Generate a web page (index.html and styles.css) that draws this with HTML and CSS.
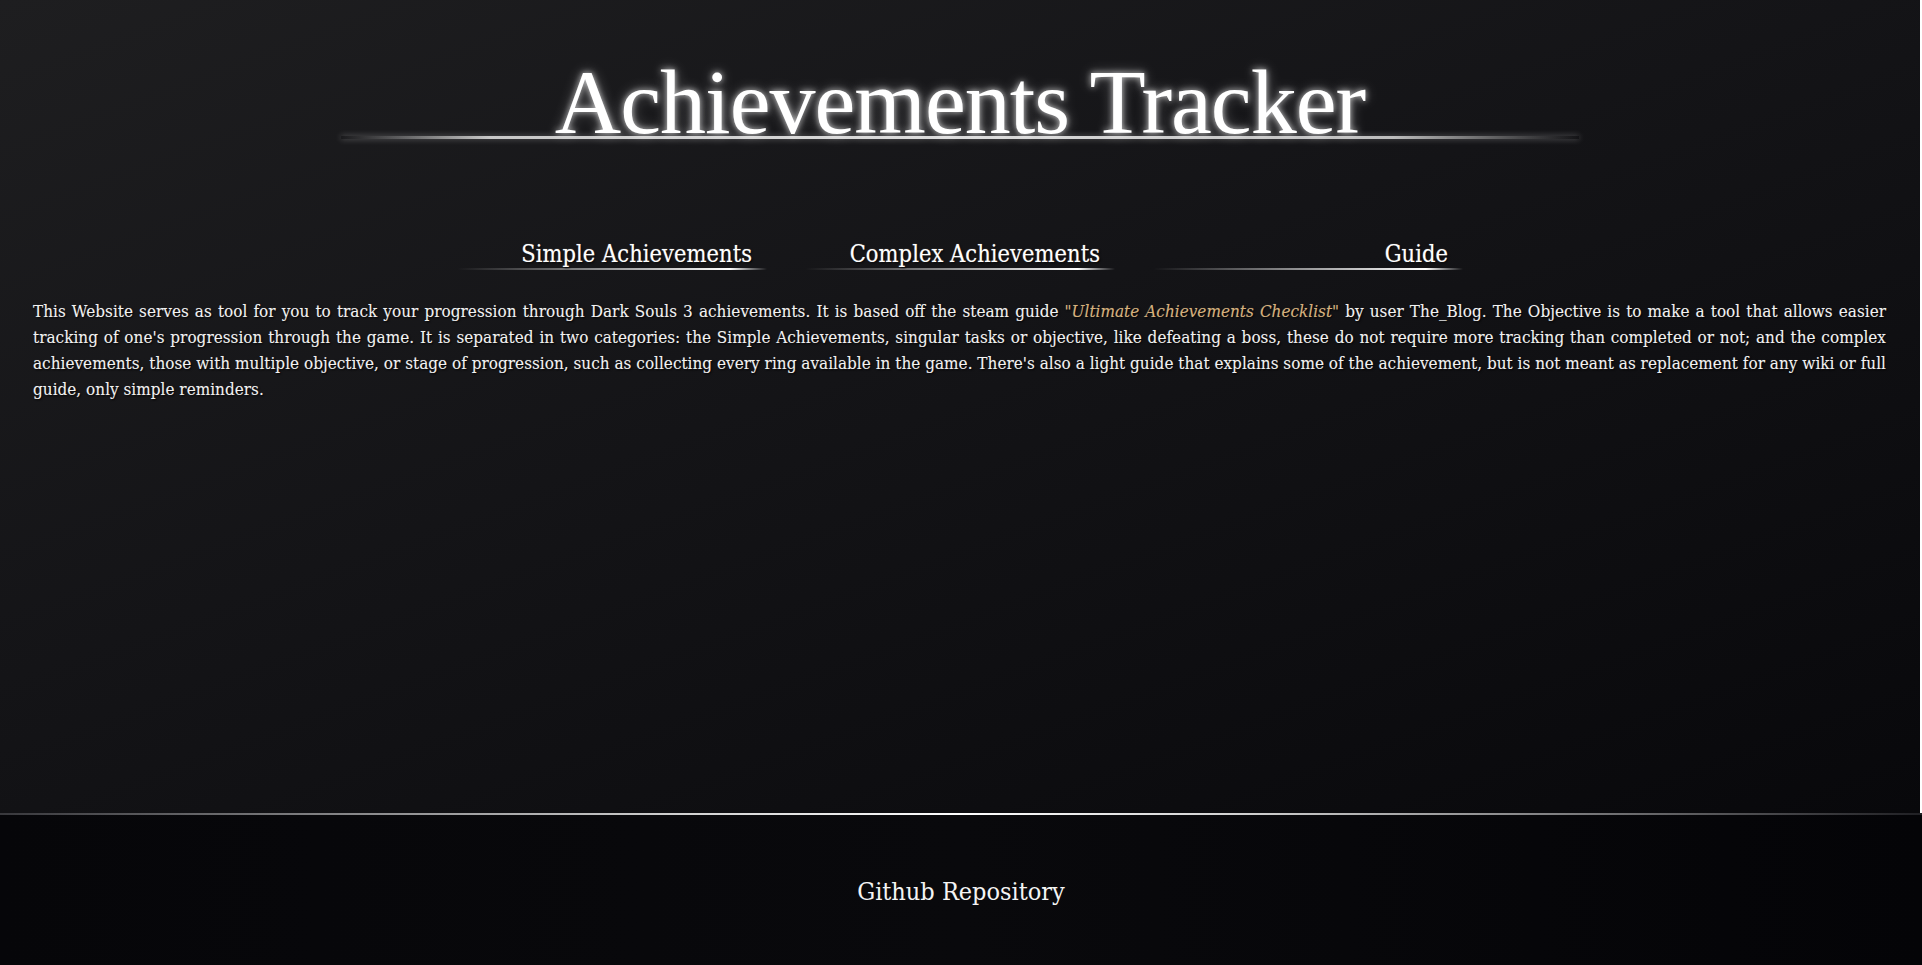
FILE: index.html
```html
<!DOCTYPE html>
<html lang="en">
  <head>
    <meta charset="UTF-8" />
    <meta name="viewport" content="width=device-width, initial-scale=1.0" />
    <title>Achievements Tracker</title>
    <link rel="stylesheet" href="styles.css">
  </head>
  <body>
    <div class="main">
      <header>
        <h1>Achievements Tracker</h1>
        <div class="title-line"></div>
      </header>

      <nav class="menu">
        <div class="menu-cell"><a class="menu-item" href="#">Simple Achievements</a></div>
        <div class="menu-cell"><a class="menu-item" href="#">Complex Achievements</a></div>
        <div class="menu-cell"><a class="menu-item" href="#">Guide</a></div>
      </nav>

      <p class="intro">
        This Website serves as tool for you to track your progression through Dark Souls 3 achievements. It is based off the steam guide <a class="guide-link" href="#">"Ultimate Achievements Checklist"</a> by user The_Blog. The Objective is to make a tool that allows easier tracking of one's progression through the game. It is separated in two categories: the Simple Achievements, singular tasks or objective, like defeating a boss, these do not require more tracking than completed or not; and the complex achievements, those with multiple objective, or stage of progression, such as collecting every ring available in the game. There's also a light guide that explains some of the achievement, but is not meant as replacement for any wiki or full guide, only simple reminders.
      </p>
    </div>

    <footer>
      <a class="repo-link" href="#">Github Repository</a>
    </footer>
  </body>
</html>
```

FILE: styles.css
```css
body {
  margin: 0;
  padding: 0;
  background: #fff;
  font-family: "DejaVu Serif Condensed", "DejaVu Serif", serif;
  color: #f2f2f2;
}

a {
  color: inherit;
  text-decoration: none;
}

.main {
  width: calc(100% - 2px);
  min-height: 813px;
  box-sizing: border-box;
  background: linear-gradient(160deg, #1e1e20 0%, #141417 45%, #08080b 100%);
  overflow: hidden;
}

header h1 {
  margin: 0;
  padding-top: 56px;
  font-family: "Liberation Serif", serif;
  font-weight: normal;
  font-size: 92px;
  line-height: 1;
  letter-spacing: -1px;
  text-align: center;
  color: #fff;
  text-shadow: 0 0 6px rgba(255, 255, 255, 0.75), 0 0 14px rgba(255, 255, 255, 0.35);
}

.title-line {
  width: 1238px;
  height: 3px;
  margin: -12px auto 0;
  background: linear-gradient(90deg, rgba(255, 255, 255, 0) 0%, #c8c8c8 12%, #dcdcdc 50%, #bdbdbd 85%, rgba(255, 255, 255, 0) 100%);
  box-shadow: 0 0 6px rgba(255, 255, 255, 0.35);
}

.menu {
  display: flex;
  justify-content: center;
  gap: 38px;
  margin-top: 101px;
}

.menu-cell {
  width: 310px;
  box-sizing: border-box;
  padding: 0 15px 2px 0;
  text-align: right;
  background: linear-gradient(90deg, rgba(255, 255, 255, 0) 0%, rgba(255, 255, 255, 0.35) 30%, #fff 88%, rgba(255, 255, 255, 0) 100%) no-repeat left bottom / 100% 2px;
}

.menu-item {
  display: inline-block;
  font-size: 23.5px;
  line-height: 28px;
  color: #fff;
  text-shadow: 1px 1px 2px #000, 0 0 1px rgba(255, 255, 255, 0.7);
}

.intro {
  margin: 28px 34px 0 33px;
  font-size: 17px;
  line-height: 26px;
  text-align: justify;
  text-shadow: 1px 1px 2px #000, 0 0 1px rgba(255, 255, 255, 0.3);
}

.guide-link {
  font-style: italic;
  color: #d7b17b;
}

footer {
  position: relative;
  height: 152px;
  box-sizing: border-box;
  padding-top: 4px;
  display: flex;
  align-items: center;
  justify-content: center;
  background: linear-gradient(90deg, #060609 0%, #09090c 50%, #040407 100%);
}

footer::before {
  content: "";
  position: absolute;
  top: 0;
  left: 0;
  right: 0;
  height: 2px;
  background: linear-gradient(90deg, rgba(90, 90, 95, 0.6) 0%, #cfcfcf 35%, #fff 50%, #cfcfcf 65%, rgba(60, 60, 65, 0.5) 100%);
}

.repo-link {
  font-size: 25px;
  color: #f4f4f4;
}
```
